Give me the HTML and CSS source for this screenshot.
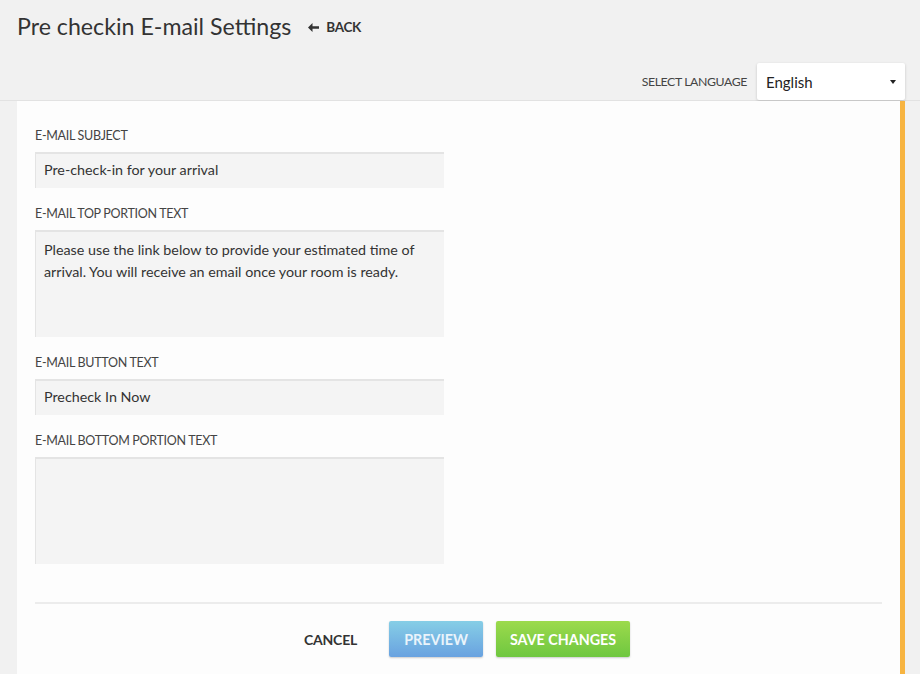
FILE: index.html
```html
<!DOCTYPE html>
<html>
<head>
<meta charset="utf-8">
<link rel="stylesheet" href="styles.css">
</head>
<body>
<div class="page">
  <header class="top">
    <div class="title-row">
      <h1 class="title">Pre checkin E-mail Settings</h1>
      <a class="back"><svg class="arrow" width="11" height="9" viewBox="0 0 11 9"><path d="M0 4.5 L4.5 0 L4.5 3.2 L11 3.2 L11 5.8 L4.5 5.8 L4.5 9 Z" fill="#333"/></svg>BACK</a>
    </div>
    <div class="lang-row">
      <span class="lang-label">SELECT LANGUAGE</span>
      <div class="lang-select"><span>English</span><span class="caret"></span></div>
    </div>
  </header>
  <div class="band">
    <main class="panel">
      <div class="field">
        <label class="label">E-MAIL SUBJECT</label>
        <div class="input">Pre-check-in for your arrival</div>
      </div>
      <div class="field">
        <label class="label">E-MAIL TOP PORTION TEXT</label>
        <div class="input area">Please use the link below to provide your estimated time of arrival. You will receive an email once your room is ready.</div>
      </div>
      <div class="field">
        <label class="label">E-MAIL BUTTON TEXT</label>
        <div class="input">Precheck In Now</div>
      </div>
      <div class="field">
        <label class="label">E-MAIL BOTTOM PORTION TEXT</label>
        <div class="input area"></div>
      </div>
      <div class="divider"></div>
      <div class="actions">
        <a class="cancel">CANCEL</a>
        <a class="btn preview">PREVIEW</a>
        <a class="btn save">SAVE CHANGES</a>
      </div>
    </main>
  </div>
</div>
</body>
</html>
```
FILE: styles.css
```css
* { box-sizing: border-box; }
html, body { margin: 0; padding: 0; }
body {
  font-family: Lato, "Open Sans", sans-serif;
  background: #f1f1f1;
  color: #333;
  width: 920px;
  height: 674px;
  overflow: hidden;
}
.page { display: flex; flex-direction: column; height: 674px; }
.top { display: flex; flex-direction: column; height: 101px; border-bottom: 1px solid #e2e2e2; }
.title-row { display: flex; align-items: center; padding: 11px 0 0 17px; height: 41px; }
.title { margin: 0; font-weight: 400; font-size: 23.2px; color: #333; }
.back { display: flex; align-items: center; margin-left: 17px; font-size: 13.5px; font-weight: 700; color: #333; margin-top: 3px; letter-spacing: -0.3px; }
.arrow { margin-right: 7px; }
.lang-row { display: flex; justify-content: flex-end; align-items: center; margin-top: 23px; padding-right: 15px; }
.lang-label { font-size: 12.3px; color: #444; margin-right: 10px; letter-spacing: -0.4px; }
.lang-select {
  width: 148px; height: 37px; background: #fff; display: flex; align-items: center; justify-content: space-between;
  padding: 0 9px 0 9px; font-size: 15px; color: #222; box-shadow: 0 1px 3px rgba(0,0,0,0.18); border-radius: 2px;
}
.caret { width: 0; height: 0; border-left: 3px solid transparent; border-right: 3px solid transparent; border-top: 4px solid #222; }
.band { flex: 1; display: flex; padding-left: 17px; padding-right: 15px; }
.panel {
  flex: 1; background: #fdfdfd; border-right: 5px solid #f7b441; padding: 27px 18px 0 18px;
  display: flex; flex-direction: column;
}
.field { display: flex; flex-direction: column; margin-bottom: 18px; }
.label { font-size: 12.5px; color: #444; margin-bottom: 9px; line-height: 15px; letter-spacing: -0.3px; }
.input {
  width: 409px; height: 36px; background: #f4f4f4; border-top: 2px solid #e4e4e4; border-left: 1px solid #e4e4e4;
  font-size: 14.3px; color: #333; padding: 6px 8px; line-height: 20px;
}
.input.area { height: 107px; padding-top: 7px; line-height: 22px; padding-right: 20px; }
.divider { height: 2px; background: #ececec; margin-top: 20px; width: 847px; }
.actions { display: flex; align-items: center; justify-content: center; padding-top: 17px; padding-left: 17px; }
.cancel { font-size: 14px; font-weight: 700; color: #333; margin-right: 32px; letter-spacing: -0.2px; }
.btn {
  height: 36px; display: flex; align-items: center; justify-content: center; color: #fff; font-weight: 700; font-size: 14.3px;
  border-radius: 2px; box-shadow: 0 1px 2px rgba(0,0,0,0.2);
}
.preview { width: 94px; background: linear-gradient(#86cee6, #69a2e0); color: #eaf4fb; margin-right: 13px; }
.save { width: 134px; background: linear-gradient(#9cda4c, #6fc740); }
```
